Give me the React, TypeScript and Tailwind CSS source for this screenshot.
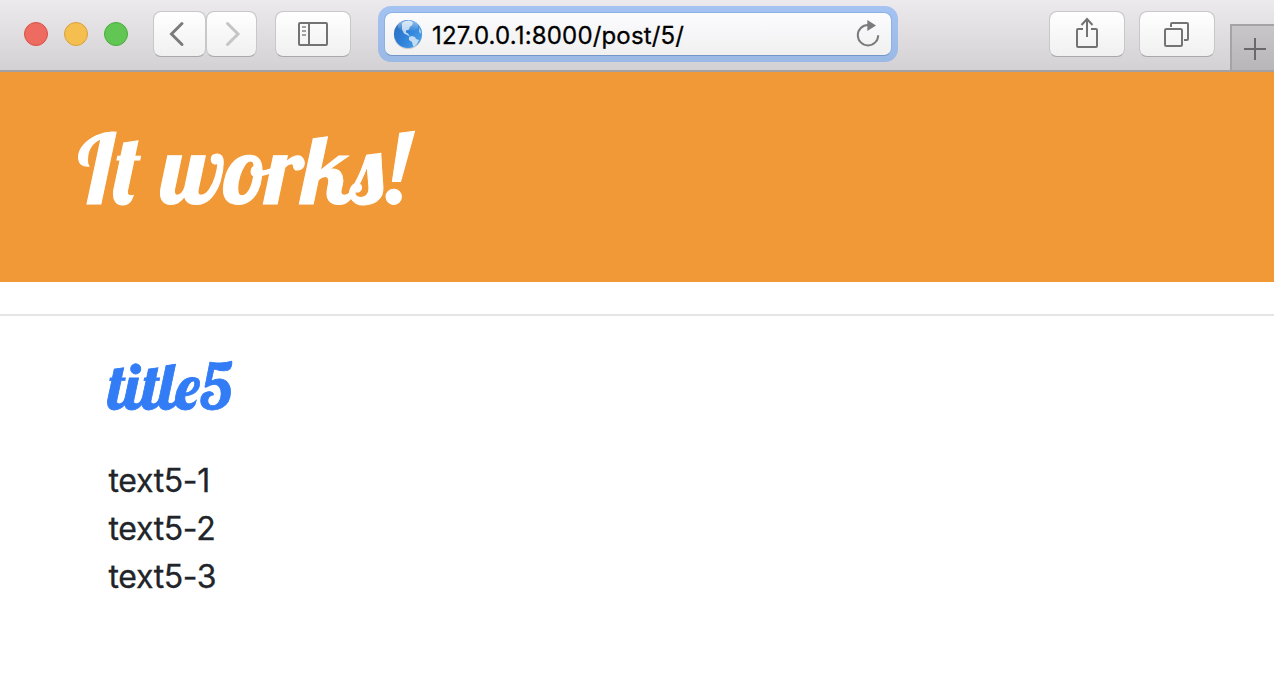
import type { ReactNode } from "react";

const BUTTON =
  "flex h-[46px] shrink-0 items-center justify-center rounded-[8px] border border-[#c9c7ca] border-b-[#aaa8ab] bg-linear-to-b from-white to-[#f0f0f0] bg-clip-padding";

function ToolButton({ label, className, children }: { label: string; className: string; children: ReactNode }) {
  return (
    <button aria-label={label} className={`${BUTTON} ${className}`}>
      {children}
    </button>
  );
}

function Globe() {
  return (
    <svg className="ml-[8px] h-[31px] w-[30px] shrink-0" viewBox="0 0 30 31">
      <defs>
        <linearGradient id="sea" x1="0" y1="0.2" x2="1" y2="0.8">
          <stop offset="0" stopColor="#2e70c2" />
          <stop offset=".45" stopColor="#2d80d8" />
          <stop offset="1" stopColor="#4aa0ea" />
        </linearGradient>
        <linearGradient id="sheen" x1="0" y1="0" x2="0" y2="1">
          <stop offset="0" stopColor="#fff" stopOpacity=".5" />
          <stop offset="1" stopColor="#fff" stopOpacity="0" />
        </linearGradient>
      </defs>
      <circle cx="15" cy="16" r="14.2" fill="#777" opacity=".3" />
      <circle cx="15" cy="15" r="14" fill="url(#sea)" />
      <path d="M9 4Q12 1 17 1.500l3 2-1 3-2 1-1 3-3 1 0 2 2 1 2 3-2-1-4-2-2-4 0-4z" fill="#b9d6ef" />
      <path d="M16 18l3-1 3 1 1 2 3 1-2 4-3 3-1-1-1-4-3-2z" fill="#c3dcf1" />
      <path d="M26 8l2 4v3l-2-2z" fill="#9cc8ee" />
      <ellipse cx="15" cy="7" rx="10.500" ry="5.500" fill="url(#sheen)" />
    </svg>
  );
}

function Toolbar() {
  return (
    <header className="flex h-[72px] border-b-2 border-[#a3a1a4] bg-linear-to-b from-[#eceaed] to-[#d3d1d4] pt-[11px]">
      <div className="ml-6 mt-[11px] flex gap-4">
        <span className="size-6 rounded-full border border-[#d95046] bg-[#ed6b60]" />
        <span className="size-6 rounded-full border border-[#d9a03c] bg-[#f5bf4f]" />
        <span className="size-6 rounded-full border border-[#4aab3e] bg-[#61c654]" />
      </div>
      <ToolButton label="Back" className="ml-[25px] w-[53px]">
        <svg className="-ml-[7px] size-[26px]" viewBox="0 0 26 26" fill="none" stroke="#7b7b7b" strokeWidth="3">
          <path d="M19 2.500 8.500 13 19 23.500" strokeLinecap="round" />
        </svg>
      </ToolButton>
      <ToolButton label="Forward" className="w-[51px]">
        <svg className="ml-[3px] size-[26px]" viewBox="0 0 26 26" fill="none" stroke="#c5c5c5" strokeWidth="3">
          <path d="M7.500 2.500 18 13 7.500 23.500" strokeLinecap="round" />
        </svg>
      </ToolButton>
      <ToolButton label="Sidebar" className="ml-[18px] w-[76px]">
        <svg className="h-6 w-[30px]" viewBox="0 0 30 24" fill="none" stroke="#737373" strokeWidth="2">
          <rect x="1" y="1" width="28" height="22" rx="1" />
          <path d="M11 1v22" />
          <path d="M4 5h4M4 9h4M4 13h4" stroke="#a0a0a0" />
        </svg>
      </ToolButton>
      <div className="-mt-[5px] ml-[27px] h-14 w-[520px] shrink-0 rounded-[13px] bg-linear-to-b from-[#a4c3f2] to-[#9bb9e5] p-[6px]">
        <div className="flex h-11 items-center rounded-[8px] border border-[#8cb2e5] border-b-[#7597c7] bg-linear-to-b from-[#fcfcff] to-[#f0f0f0]">
          <Globe />
          <span className="ml-[9px] mt-[3px] w-[252px] whitespace-nowrap font-['Inter',sans-serif] text-[24px] leading-[30px] tracking-[0.16px] text-black [-webkit-text-stroke:0.3px_black]">
            127.0.0.1:8000/post/5/
          </span>
          <svg className="ml-auto mr-[10px] h-[28px] w-[26px]" viewBox="0 0 26 28" fill="none" stroke="#7b7b7b" strokeWidth="2">
            <path d="M13 5A10.200 10.200 0 1 0 23.200 15.200" />
            <path d="M12.300 0v11l8.700-5.500z" fill="#7b7b7b" stroke="none" />
          </svg>
        </div>
      </div>
      <ToolButton label="Share" className="ml-[151px] w-[76px]">
        <svg className="-mt-[3px] h-8 w-6" viewBox="0 0 24 32" fill="none" stroke="#737373" strokeWidth="2">
          <path d="M8 12H3q-1 0-1 1v16q0 1 1 1h18q1 0 1-1V13q0-1-1-1h-5" />
          <path d="M12 20V2.500M6.500 8 12 2l5.500 6" />
        </svg>
      </ToolButton>
      <ToolButton label="Show tabs" className="ml-[14px] w-[76px]">
        <svg className="-mt-px -ml-[2px] h-[26px] w-[26px]" viewBox="0 0 26 26" fill="none" stroke="#737373" strokeWidth="2">
          <rect x="2" y="8" width="17" height="17" rx="1.500" />
          <path d="M8 6V3q0-1 1-1h15q1 0 1 1v15q0 1-1 1h-3" />
        </svg>
      </ToolButton>
      <button
        aria-label="New tab"
        className="ml-[15px] mt-[13px] flex h-[46px] w-[44px] shrink-0 items-center border-l-2 border-t-2 border-[#a5a3a6] bg-linear-to-b from-[#c8c6c9] to-[#b8b6b9] pl-[12px]"
      >
        <svg className="mt-[2px] size-[22px]" viewBox="0 0 22 22" stroke="#69686a" strokeWidth="2">
          <path d="M11 0v22M0 11h22" />
        </svg>
      </button>
    </header>
  );
}

const LINES = ["text5-1", "text5-2", "text5-3"];
const SCRIPT = "font-['Lobster','Liberation_Serif',serif] font-normal not-italic whitespace-nowrap";

export default function App() {
  return (
    <div className="h-[684px] w-[1274px] overflow-hidden bg-white">
      <Toolbar />
      <section className="h-[210px] bg-[#f19937] pl-[78px] pt-[36px]">
        <h1 className={`${SCRIPT} text-[96px] leading-[120px] text-white [-webkit-text-stroke:1px_white]`}>It works!</h1>
      </section>
      <hr className="mt-8 border-t-2 border-[#e5e5e5]" />
      <main className="pl-[108px] pt-[30px]">
        <h2 className={`${SCRIPT} h-[80px] text-[64px] leading-[80px] text-[#327cf6] [-webkit-text-stroke:0.8px_#327cf6]`}>title5</h2>
        <div className="mt-[31px] pl-[0.5px] font-['Inter',sans-serif] text-[32px] leading-[48px] tracking-[-0.35px] text-[#212529] [-webkit-text-stroke:0.3px_#212529]">
          {LINES.map((line) => (
            <p key={line}>{line}</p>
          ))}
        </div>
      </main>
    </div>
  );
}
